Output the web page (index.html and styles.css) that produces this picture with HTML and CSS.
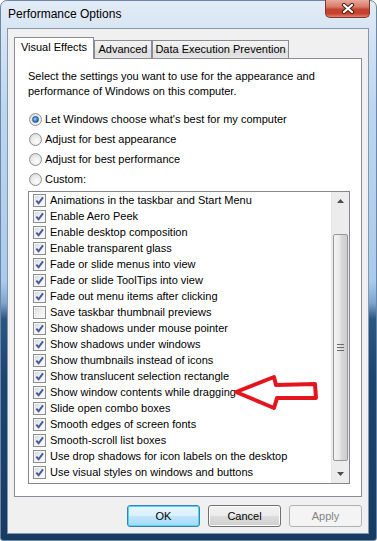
FILE: index.html
```html
<!doctype html>
<html>
<head>
    <meta charset="utf-8">
    <title>Performance Options</title>
    <link rel="stylesheet" href="styles.css">
</head>
<body>
<div class="window">
    <div class="titlebar">
        <span class="title">Performance Options</span>
        <div class="close">
            <svg width="14" height="11" viewBox="0 0 14 11">
                <path d="M3 2 L11 9 M11 2 L3 9" stroke="#43231c" stroke-width="4.2" stroke-linecap="round"/>
                <path d="M3 2 L11 9 M11 2 L3 9" stroke="#fff" stroke-width="2.2" stroke-linecap="round"/>
            </svg>
        </div>
    </div>
    <div class="client">
        <div class="tabs">
            <div class="tab tab-active">Visual Effects</div>
            <div class="tab tab-advanced">Advanced</div>
            <div class="tab tab-dep">Data Execution Prevention</div>
        </div>
        <div class="panel">
            <p class="intro">Select the settings you want to use for the appearance and performance of Windows on this computer.</p>
            <div class="radios">
                <div class="radio-row"><span class="radio radio-on"></span>Let Windows choose what's best for my computer</div>
                <div class="radio-row"><span class="radio"></span>Adjust for best appearance</div>
                <div class="radio-row"><span class="radio"></span>Adjust for best performance</div>
                <div class="radio-row"><span class="radio"></span>Custom:</div>
            </div>
            <div class="listbox">
                <div class="items">
                    <div class="item"><span class="check on"><svg width="11" height="11" viewBox="0 0 11 11"><path d="M2.3 5.6 L4.6 8.2 L9 2.4" fill="none" stroke="#42589a" stroke-width="1.9"/></svg></span>Animations in the taskbar and Start Menu</div>
                    <div class="item"><span class="check on"><svg width="11" height="11" viewBox="0 0 11 11"><path d="M2.3 5.6 L4.6 8.2 L9 2.4" fill="none" stroke="#42589a" stroke-width="1.9"/></svg></span>Enable Aero Peek</div>
                    <div class="item"><span class="check on"><svg width="11" height="11" viewBox="0 0 11 11"><path d="M2.3 5.6 L4.6 8.2 L9 2.4" fill="none" stroke="#42589a" stroke-width="1.9"/></svg></span>Enable desktop composition</div>
                    <div class="item"><span class="check on"><svg width="11" height="11" viewBox="0 0 11 11"><path d="M2.3 5.6 L4.6 8.2 L9 2.4" fill="none" stroke="#42589a" stroke-width="1.9"/></svg></span>Enable transparent glass</div>
                    <div class="item"><span class="check on"><svg width="11" height="11" viewBox="0 0 11 11"><path d="M2.3 5.6 L4.6 8.2 L9 2.4" fill="none" stroke="#42589a" stroke-width="1.9"/></svg></span>Fade or slide menus into view</div>
                    <div class="item"><span class="check on"><svg width="11" height="11" viewBox="0 0 11 11"><path d="M2.3 5.6 L4.6 8.2 L9 2.4" fill="none" stroke="#42589a" stroke-width="1.9"/></svg></span>Fade or slide ToolTips into view</div>
                    <div class="item"><span class="check on"><svg width="11" height="11" viewBox="0 0 11 11"><path d="M2.3 5.6 L4.6 8.2 L9 2.4" fill="none" stroke="#42589a" stroke-width="1.9"/></svg></span>Fade out menu items after clicking</div>
                    <div class="item"><span class="check"></span>Save taskbar thumbnail previews</div>
                    <div class="item"><span class="check on"><svg width="11" height="11" viewBox="0 0 11 11"><path d="M2.3 5.6 L4.6 8.2 L9 2.4" fill="none" stroke="#42589a" stroke-width="1.9"/></svg></span>Show shadows under mouse pointer</div>
                    <div class="item"><span class="check on"><svg width="11" height="11" viewBox="0 0 11 11"><path d="M2.3 5.6 L4.6 8.2 L9 2.4" fill="none" stroke="#42589a" stroke-width="1.9"/></svg></span>Show shadows under windows</div>
                    <div class="item"><span class="check on"><svg width="11" height="11" viewBox="0 0 11 11"><path d="M2.3 5.6 L4.6 8.2 L9 2.4" fill="none" stroke="#42589a" stroke-width="1.9"/></svg></span>Show thumbnails instead of icons</div>
                    <div class="item"><span class="check on"><svg width="11" height="11" viewBox="0 0 11 11"><path d="M2.3 5.6 L4.6 8.2 L9 2.4" fill="none" stroke="#42589a" stroke-width="1.9"/></svg></span>Show translucent selection rectangle</div>
                    <div class="item"><span class="check on"><svg width="11" height="11" viewBox="0 0 11 11"><path d="M2.3 5.6 L4.6 8.2 L9 2.4" fill="none" stroke="#42589a" stroke-width="1.9"/></svg></span>Show window contents while dragging</div>
                    <div class="item"><span class="check on"><svg width="11" height="11" viewBox="0 0 11 11"><path d="M2.3 5.6 L4.6 8.2 L9 2.4" fill="none" stroke="#42589a" stroke-width="1.9"/></svg></span>Slide open combo boxes</div>
                    <div class="item"><span class="check on"><svg width="11" height="11" viewBox="0 0 11 11"><path d="M2.3 5.6 L4.6 8.2 L9 2.4" fill="none" stroke="#42589a" stroke-width="1.9"/></svg></span>Smooth edges of screen fonts</div>
                    <div class="item"><span class="check on"><svg width="11" height="11" viewBox="0 0 11 11"><path d="M2.3 5.6 L4.6 8.2 L9 2.4" fill="none" stroke="#42589a" stroke-width="1.9"/></svg></span>Smooth-scroll list boxes</div>
                    <div class="item"><span class="check on"><svg width="11" height="11" viewBox="0 0 11 11"><path d="M2.3 5.6 L4.6 8.2 L9 2.4" fill="none" stroke="#42589a" stroke-width="1.9"/></svg></span>Use drop shadows for icon labels on the desktop</div>
                    <div class="item"><span class="check on"><svg width="11" height="11" viewBox="0 0 11 11"><path d="M2.3 5.6 L4.6 8.2 L9 2.4" fill="none" stroke="#42589a" stroke-width="1.9"/></svg></span>Use visual styles on windows and buttons</div>
                </div>
                <div class="scrollbar">
                    <div class="sb-btn"><svg width="7" height="4" viewBox="0 0 7 4"><path d="M0 4 L3.5 0 L7 4 Z" fill="#4d4d4d"/></svg></div>
                    <div class="sb-track sb-track-top"></div>
                    <div class="sb-thumb">
                        <span class="grip"></span>
                    </div>
                    <div class="sb-track sb-track-bottom"></div>
                    <div class="sb-btn"><svg width="7" height="4" viewBox="0 0 7 4"><path d="M0 0 L3.5 4 L7 0 Z" fill="#4d4d4d"/></svg></div>
                </div>
            </div>
        </div>
        <div class="buttons">
            <button class="btn btn-default">OK</button>
            <button class="btn">Cancel</button>
            <button class="btn btn-disabled">Apply</button>
        </div>
    </div>

    <!-- red annotation arrow drawn over the list -->
    <svg class="arrow" width="92" height="44" viewBox="0 0 92 44">
        <path d="M6 20 L44 5 L46 13 L85 12 L86 26 L47 26 L44 36 Z" fill="none" stroke="#e3161f" stroke-width="4" stroke-linejoin="round"/>
    </svg>
</div>
</body>
</html>
```

FILE: styles.css
```css
body {margin: 0; padding: 0; background: #fff; font-family: 'Liberation Sans', 'DejaVu Sans', sans-serif; font-size: 11px; color: #000;}

.window {position: relative; width: 377px; height: 541px; box-sizing: border-box; display: flex; flex-direction: column; border-radius: 7px 7px 3px 3px; border: 1px solid #6c86a3;
    background: linear-gradient(to bottom, #e3ecf6 0%, #d6e4f3 6%, #bcd6f0 20%, #aacbed 52%, #7fa6cf 56%, #2b5684 59%, #1d4470 70%, #183b62 100%);}

.titlebar {height: 27px; display: flex; justify-content: space-between; align-items: flex-start;}
.title {padding: 6px 0 0 7px; line-height: 15px; font-size: 12px;}
.close {width: 45px; height: 18px; margin-right: 6px; margin-top: -1px; box-sizing: border-box; border: 1px solid #7a3a2e; border-top: none; border-radius: 0 0 5px 5px; display: flex; align-items: center; justify-content: center;
    background: linear-gradient(to bottom, #e9a99b 0%, #d97b68 40%, #c3432f 55%, #c8412c 80%, #e0826c 100%);}

.client {flex: 1; margin: 0 7px 6px 6px; background: #f0f0f0; border: 1px solid #8397ad; padding: 8px 6px 0 6px; display: flex; flex-direction: column;}

.tabs {display: flex; align-items: flex-end; height: 21px;}
.tab {height: 18px; box-sizing: border-box; border: 1px solid #898c95; border-bottom: none; line-height: 17px; text-align: center; white-space: nowrap; background: linear-gradient(to bottom, #f3f3f3 0%, #ebebeb 50%, #dedede 51%, #e4e4e4 100%);}
.tab-active {position: relative; z-index: 1; height: 22px; width: 80px; margin-bottom: -1px; background: #fff; line-height: 18px;}
.tab-advanced {width: 58px;}
.tab-dep {width: 137px;}

.panel {height: 439px; box-sizing: border-box; background: #fff; border: 1px solid #898c95; padding: 10px 11px 12px 13px; display: flex; flex-direction: column;}
.intro {margin: 0; line-height: 15px; padding-right: 20px;}

.radios {margin-top: 10px;}
.radio-row {height: 20px; display: flex; align-items: center; padding-left: 1px;}
.radio {width: 13px; height: 13px; box-sizing: border-box; border-radius: 50%; border: 1px solid #8d8f91; margin-right: 3px; display: flex; align-items: center; justify-content: center;
    background: radial-gradient(circle at 60% 65%, #fdfdfd 0%, #e8e8e8 55%, #cfd1d3 100%);}
.radio-on::after {content: ''; width: 5px; height: 5px; border-radius: 50%; border: 1px solid #1e4f86; background: radial-gradient(circle at 40% 40%, #9bd1f7 0%, #2f7bc4 60%, #1a4f8f 100%);}

.listbox {margin-top: 2px; flex: 1; border: 1px solid #828790; display: flex;}
.items {flex: 1; overflow: hidden;}
.item {height: 16px; display: flex; align-items: center; padding-left: 4px; white-space: nowrap;}
.check {width: 13px; height: 13px; box-sizing: border-box; border: 1px solid #8f8f8f; margin-right: 4px; display: flex; align-items: center; justify-content: center;
    background: linear-gradient(135deg, #d6d8db 0%, #eceef0 50%, #fafafa 100%); box-shadow: inset 0 0 0 1px #f4f4f4;}

.scrollbar {width: 17px; display: flex; flex-direction: column; background: #ececec; border-left: 1px solid #e6e6e6;}
.sb-btn {height: 17px; display: flex; align-items: center; justify-content: center;}
.sb-track-top {height: 25px;}
.sb-track-bottom {height: 4px;}
.sb-thumb {height: 227px; margin: 0 1px; box-sizing: border-box; border: 1px solid #979797; border-radius: 2px; display: flex; align-items: center; justify-content: center;
    background: linear-gradient(to right, #f4f4f4 0%, #e8e8e8 45%, #d9d9d9 55%, #cdcdcd 100%);}
.grip {width: 7px; height: 5px; border-top: 1px solid #6b6b6b; border-bottom: 1px solid #6b6b6b;}
.grip::after {content: ''; display: block; margin-top: 2px; height: 1px; background: #6b6b6b;}

.buttons {display: flex; justify-content: flex-end; gap: 8px; margin-top: 8px;}
.btn {width: 73px; height: 22px; box-sizing: border-box; border: 1px solid #707070; border-radius: 3px; font-family: inherit; font-size: 11px; color: #000; padding: 0;
    background: linear-gradient(to bottom, #f2f2f2 0%, #ebebeb 50%, #dddddd 51%, #cfcfcf 100%); box-shadow: inset 0 0 0 1px #fcfcfc;}
.btn-default {border-color: #3c7fb1; box-shadow: inset 0 0 0 1px #48d8fb;
    background: linear-gradient(to bottom, #eaf6fd 0%, #d9f0fc 50%, #bee6fd 51%, #a7d9f5 100%);}
.btn-disabled {border-color: #adb2b5; color: #838383; background: #f4f4f4; box-shadow: none;}

.arrow {position: absolute; left: 229px; top: 371px;}
```
